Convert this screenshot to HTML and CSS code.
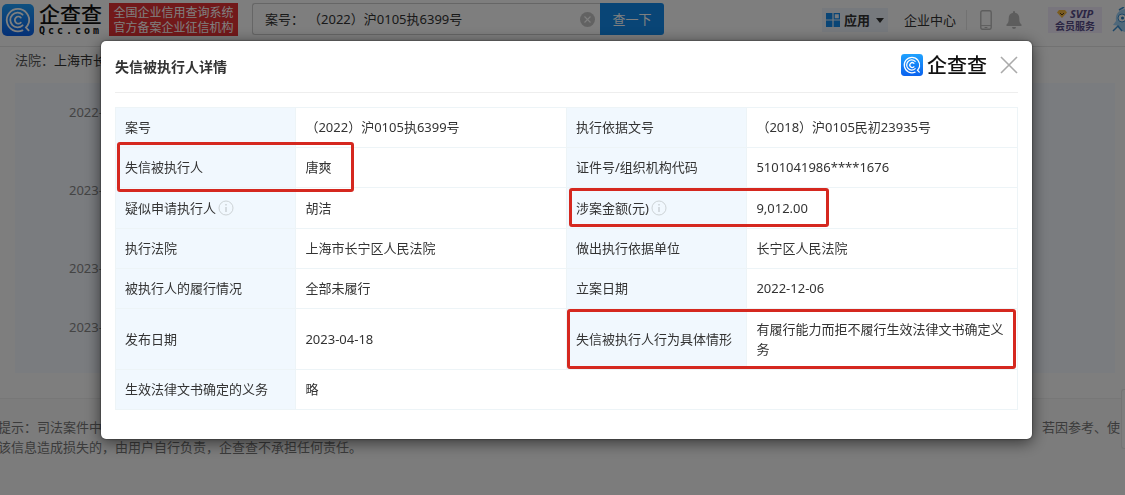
FILE: index.html
```html
<!DOCTYPE html>
<html lang="zh-CN">
<head>
<meta charset="utf-8">
<meta name="viewport" content="width=device-width, initial-scale=1">
<title>失信被执行人详情</title>
<link rel="stylesheet" href="styles.css">
</head>
<body>
<svg class="defs" aria-hidden="true">
  <defs>
    <linearGradient id="brand" x1="0" y1="0" x2="0" y2="1">
      <stop offset="0" stop-color="#1fa2ff"/><stop offset="1" stop-color="#0a62ee"/>
    </linearGradient>
    <symbol id="qcc" viewBox="0 0 32 32">
      <rect width="32" height="32" rx="5" fill="url(#brand)"/>
      <g fill="none" stroke="#fff" stroke-width="1.8" stroke-linecap="round">
        <path d="M20.500 26.400A11.200 11.200 0 1 1 26.900 18.600Q26 21.500 24 23.500L26.600 26.400"/>
        <path d="M20.600 21.300A7.300 7.300 0 1 1 20.600 10.700"/>
        <path d="M18.800 18.600A3.500 3.500 0 1 1 18.800 13.600"/>
      </g>
    </symbol>
    <symbol id="info" viewBox="0 0 16 16">
      <circle cx="8" cy="8" r="7" fill="none" stroke="#cdd3d6"/>
      <path d="M8 7v5M8 4v1.4" stroke="#c2c9cc" stroke-width="1.2"/>
    </symbol>
  </defs>
</svg>

<header class="topbar">
  <a class="logo" href="#">
    <svg class="logo-mark"><use href="#qcc"/></svg>
    <span class="logo-words"><span class="logo-name">企查查</span><span class="logo-domain">Qcc.com</span></span>
  </a>
  <p class="slogan"><span>全国企业信用查询系统</span><span>官方备案企业征信机构</span></p>
  <form class="search">
    <label class="search-box"><span>案号：</span>
      <input type="text" aria-label="案号" value="（2022）沪0105执6399号">
      <button class="clear" type="button" aria-label="清除"><svg viewBox="0 0 15 15"><circle cx="7.5" cy="7.5" r="7.5" fill="#c4c4c4"/><path d="M4.5 4.5l6 6M10.5 4.5l-6 6" stroke="#fff" stroke-width="1.1"/></svg></button>
    </label>
    <button class="search-go" type="button">查一下</button>
  </form>
  <nav class="tools">
    <button class="apps" type="button">
      <svg class="apps-icon" viewBox="0 0 14 14"><path d="M0 0h6.400v6.400H0zM0 7.600h6.400V14H0zM7.600 7.600H14V14H7.600z" fill="#128bed"/><path d="M8.200.6h5.200v5.200H8.200z" fill="none" stroke="#128bed" stroke-width="1.200"/></svg>
      应用
      <svg class="caret" viewBox="0 0 8 5"><path d="M0 0h8L4 5z" fill="#333"/></svg>
    </button>
    <a class="center-link" href="#">企业中心</a>
    <svg class="phone" viewBox="0 0 12 20"><rect x=".8" y=".8" width="10.4" height="18.4" rx="1.6" fill="none" stroke="#bbb" stroke-width="1.4"/><path d="M1 15.6h10M4.6 17.5h2.8" stroke="#bbb"/></svg>
    <svg class="bell" viewBox="0 0 16 18"><path d="M7 1a1 1 0 0 1 2 0v.8c2.8.5 4.3 2.6 4.3 5.4 0 3.800.6 5 2.200 6.300V15H.5v-1.500C2.100 12.200 2.700 11 2.700 7.200 2.700 4.400 4.200 2.300 7 1.800zM6 16h4a2 2 0 0 1-4 0z" fill="#bbb"/></svg>
    <a class="svip" href="#"><span class="svip-top"><svg viewBox="0 0 10 8"><path d="M2 0h6l2 2.500L5 8 0 2.500z" fill="#f5b942"/><path d="M3 3l2 2 2-2" fill="none" stroke="#5a3a10"/></svg>SVIP</span><span>会员服务</span></a>
    <svg class="mascot" viewBox="0 0 13 26"><path d="M13 2C6 3 3 8 4 14l-3 4 4 .5c1 3 4 5.500 8 6.500z" fill="#9fd0f5"/><circle cx="10" cy="11" r="4" fill="#fff" stroke="#3b8fd0"/><circle cx="10.500" cy="11" r="1.500" fill="#2878b8"/><path d="M1 24l5-5 4 5M7 3l5-3" stroke="#3b8fd0" stroke-width="1.500" fill="none"/></svg>
  </nav>
</header>

<main class="page">
  <p class="court">法院：<span>上海市长</span></p>
  <ol class="timeline">
    <li>2022-</li><li>2023-</li><li>2023-</li><li>2023-</li>
  </ol>
</main>
<footer class="notice">
  <p class="notice-row"><span>提示：司法案件中</span><span>若因参考、使</span></p>
  <p>该信息造成损失的，由用户自行负责，企查查不承担任何责任。</p>
  <div class="side-tab"></div>
</footer>

<div class="overlay">
  <section class="modal" role="dialog" aria-labelledby="modal-title">
    <header class="modal-head">
      <h1 id="modal-title">失信被执行人详情</h1>
      <div class="modal-brand"><svg><use href="#qcc"/></svg><span>企查查</span></div>
      <button class="close" type="button" aria-label="关闭"><svg viewBox="0 0 18 18"><path d="M1 1l16 16M17 1L1 17" stroke="#aaa" stroke-width="1.600"/></svg></button>
    </header>
    <div class="detail">
      <table>
        <colgroup><col class="c-label"><col class="c-value"><col class="c-label"><col class="c-value"></colgroup>
        <tbody>
          <tr><th scope="row">案号</th><td>（2022）沪0105执6399号</td><th scope="row">执行依据文号</th><td>（2018）沪0105民初23935号</td></tr>
          <tr><th scope="row">失信被执行人</th><td>唐爽</td><th scope="row">证件号/组织机构代码</th><td>5101041986****1676</td></tr>
          <tr class="roomy"><th scope="row">疑似申请执行人<svg class="info"><use href="#info"/></svg></th><td>胡洁</td><th scope="row">涉案金额(元)<svg class="info"><use href="#info"/></svg></th><td>9,012.00</td></tr>
          <tr><th scope="row">执行法院</th><td>上海市长宁区人民法院</td><th scope="row">做出执行依据单位</th><td>长宁区人民法院</td></tr>
          <tr><th scope="row">被执行人的履行情况</th><td>全部未履行</td><th scope="row">立案日期</th><td>2022-12-06</td></tr>
          <tr class="roomy"><th scope="row">发布日期</th><td>2023-04-18</td><th scope="row">失信被执行人行为具体情形</th><td>有履行能力而拒不履行生效法律文书确定义务</td></tr>
          <tr><th scope="row">生效法律文书确定的义务</th><td colspan="3">略</td></tr>
        </tbody>
      </table>
      <div class="mark mark-person"></div>
      <div class="mark mark-amount"></div>
      <div class="mark mark-conduct"></div>
    </div>
  </section>
</div>
</body>
</html>
```

FILE: styles.css
```css
* { box-sizing: border-box; }
body {
  margin: 0;
  min-height: 100vh;
  overflow: hidden;
  background: #fcfcfc;
  color: #333;
  font: 13px/20px "Noto Sans", "Noto Sans CJK SC", sans-serif;
}
p, h1, ol { margin: 0; padding: 0; }
a { color: inherit; text-decoration: none; }
button, input { font: inherit; color: inherit; border: 0; padding: 0; background: none; }
svg { flex: none; display: block; }
.defs { position: absolute; width: 0; height: 0; }

/* Top bar */
.topbar {
  display: flex;
  align-items: flex-start;
  height: 47px;
  padding: 3px 0 0 2px;
  border-bottom: 1px solid #e4e4e4;
}
.logo { display: flex; gap: 5px; width: 107px; color: #111; }
.logo-mark { width: 32px; height: 32px; margin-top: 1px; }
.logo-words { display: flex; flex-direction: column; white-space: nowrap; }
.logo-name { font-size: 21px; line-height: 20px; font-weight: 500; font-family: "Noto Sans CJK SC", sans-serif; }
.logo-domain { margin-top: 2px; font: 700 10px/12px "DejaVu Sans Mono", monospace; letter-spacing: 3px; }
.slogan {
  display: flex;
  flex-direction: column;
  justify-content: center;
  width: 129px;
  height: 33px;
  background: #e53235;
  color: #fff;
  font-size: 12px;
  line-height: 15px;
  text-align: center;
}
.search { display: flex; width: 412px; height: 32px; margin-left: 14px; }
.search-box {
  display: flex;
  flex: 1;
  align-items: center;
  min-width: 0;
  padding: 0 5px 0 12px;
  border: 1px solid #ccc;
  border-right: 0;
  border-radius: 3px 0 0 3px;
}
.search-box input { flex: 1; min-width: 0; margin-left: 4px; outline: 0; }
.clear svg { width: 15px; height: 15px; }
.search-go { width: 64px; background: #128bed; color: #fff; border-radius: 0 3px 3px 0; }
.tools { display: flex; align-items: center; height: 34px; margin-left: auto; white-space: nowrap; }
.apps {
  display: flex;
  align-items: center;
  gap: 4px;
  height: 24px;
  padding: 0 4px;
  background: #ecf3fb;
  font-weight: 700;
}
.apps-icon { width: 14px; height: 14px; }
.caret { width: 8px; height: 5px; margin-left: 2px; }
.center-link { margin-left: 16px; padding-right: 10px; border-right: 1px solid #e4e4e4; }
.phone { width: 12px; height: 20px; margin-left: 13px; }
.bell { width: 16px; height: 18px; margin-left: 14px; }
.svip {
  display: flex;
  flex-direction: column;
  align-items: center;
  width: 54px;
  margin-left: 26px;
  padding: 1px 0;
  background: #f0eafa;
  color: #574c88;
  font-size: 10px;
  line-height: 12px;
  font-weight: 700;
}
.svip-top { display: flex; align-items: center; gap: 3px; font-size: 11px; font-style: italic; }
.svip-top svg { width: 10px; height: 8px; }
.mascot { width: 13px; height: 26px; margin-left: 10px; }

/* Case page */
.page { padding: 3px 10px 25px 15px; border-bottom: 1px solid #eee; }
.court { color: #555; }
.court span { color: #333; }
.timeline {
  height: 290px;
  margin-top: 13px;
  padding: 19px 0 0 54px;
  background: #f4f8ff;
  color: #888;
  list-style: none;
}
.timeline li { height: 78px; }
.timeline li:nth-child(3) { height: 59px; }
.notice { position: relative; min-height: 97px; padding: 18px 5px 0 0; background: #f8f8f8; color: #777; }
.notice p { margin-left: -2px; }
.notice-row { display: flex; justify-content: space-between; }
.side-tab { position: absolute; right: 0; top: -10px; width: 4px; height: 60px; border: 1px solid #e8e8e8; border-right: 0; border-radius: 3px 0 0 3px; background: #fcfcfc; }

/* Dialog */
.overlay { position: fixed; inset: 0; padding: 41px 93px 0 101px; background: rgba(0, 0, 0, .5); }
.modal {
  padding: 0 14px 29px;
  border-radius: 5px;
  background: #fff;
  box-shadow: 0 3px 16px rgba(0, 0, 0, .6), 0 0 2px rgba(0, 0, 0, .7);
}
.modal-head { display: flex; align-items: center; height: 52px; border-bottom: 1px solid #eee; }
.modal-head h1 { flex: 1; font-size: 14px; line-height: 20px; font-weight: 700; }
.modal-brand { display: flex; align-items: center; gap: 4px; margin-right: 13px; padding-bottom: 3px; color: #111; font: 500 20px/24px "Noto Sans CJK SC", sans-serif; }
.modal-brand svg { width: 22px; height: 22px; }
.close { padding-bottom: 3px; }
.close svg { width: 18px; height: 18px; }
.detail { position: relative; margin-top: 14px; }
table { width: 100%; table-layout: fixed; border-collapse: collapse; }
.c-label { width: 20%; }
.c-value { width: 30%; }
th, td { height: 40px; padding: 9px 9px 10px; border: 1px solid #edf4f7; text-align: left; font-weight: 400; }
th { background: #f1f8fe; }
.roomy th, .roomy td { padding-top: 10px; }
.info { display: inline-block; width: 16px; height: 16px; margin-left: 2px; vertical-align: -3px; }
.mark { position: absolute; border: 3px solid #d5281f; border-radius: 3px; }
.mark-person { left: 2px; top: 35px; width: 237px; height: 50px; }
.mark-amount { left: 50%; top: 81px; width: 260px; height: 39px; margin-left: 2px; }
.mark-conduct { left: 50%; right: 2px; top: 202px; height: 60px; }
```
